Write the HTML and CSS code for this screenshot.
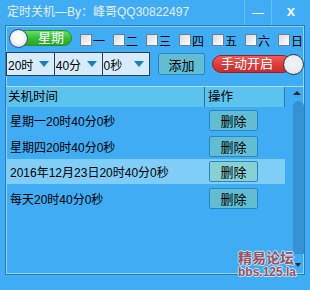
FILE: index.html
```html
<!DOCTYPE html>
<html>
<head>
<meta charset="utf-8">
<link rel="stylesheet" href="styles.css">
</head>
<body>
<div class="window">
  <div class="titlebar">
    <div class="title">定时关机—By：峰哥QQ30822497</div>
    <div class="ctrl min">—</div>
    <div class="ctrl close">x</div>
  </div>
  <div class="frame">
    <div class="row1">
      <div class="sw green"><span class="knob"></span><span class="pill">星期</span></div>
      <div class="days">
        <label class="day"><span class="cb"></span><span>一</span></label>
        <label class="day"><span class="cb"></span><span>二</span></label>
        <label class="day"><span class="cb"></span><span>三</span></label>
        <label class="day"><span class="cb"></span><span>四</span></label>
        <label class="day"><span class="cb"></span><span>五</span></label>
        <label class="day"><span class="cb"></span><span>六</span></label>
        <label class="day"><span class="cb"></span><span>日</span></label>
      </div>
    </div>
    <div class="row2">
      <div class="sel"><span>20时</span><i class="arr"></i></div>
      <div class="sel"><span>40分</span><i class="arr"></i></div>
      <div class="sel"><span>0秒</span><i class="arr"></i></div>
      <div class="btn add">添加</div>
      <div class="sw red"><span class="pill">手动开启</span><span class="knob"></span></div>
    </div>
    <div class="list">
      <div class="table">
        <div class="head">
          <div class="c1">关机时间</div>
          <div class="c2">操作</div>
        </div>
        <div class="item"><div class="c1">星期一20时40分0秒</div><div class="c2"><span class="btn del">删除</span></div></div>
        <div class="item"><div class="c1">星期四20时40分0秒</div><div class="c2"><span class="btn del">删除</span></div></div>
        <div class="item sel-row"><div class="c1">2016年12月23日20时40分0秒</div><div class="c2"><span class="btn del">删除</span></div></div>
        <div class="item"><div class="c1">每天20时40分0秒</div><div class="c2"><span class="btn del">删除</span></div></div>
      </div>
      <div class="scroll">
        <i class="up"></i>
        <div class="thumb"></div>
        <i class="down"></i>
      </div>
    </div>
  </div>
  <div class="mark"><div class="m1">精易论坛</div><div class="m2">bbs.125.la</div></div>
</div>
</body>
</html>
```
FILE: styles.css
```css
html, body {
  margin: 0;
  padding: 0;
}
body {
  width: 310px;
  height: 290px;
  background: #40acf4;
  font-family: "Liberation Sans", "Noto Sans CJK SC", sans-serif;
  font-size: 12px;
  color: #000;
  overflow: hidden;
}
.window {
  position: relative;
  width: 310px;
  height: 290px;
}
.titlebar {
  height: 25px;
  display: flex;
  align-items: stretch;
}
.title {
  flex: 1;
  padding-left: 7px;
  color: #e4eef8;
  font-size: 12px;
  line-height: 24px;
}
.ctrl {
  display: flex;
  align-items: center;
  justify-content: center;
  color: #f4f8fc;
  border-left: 1px solid #68bff4;
}
.min {
  width: 26px;
  font-size: 12px;
  line-height: 1;
}
.close {
  width: 39px;
  font-weight: bold;
  font-size: 15px;
  padding-bottom: 5px;
  box-sizing: border-box;
}
.frame {
  margin-left: 5px;
  width: 300px;
  height: 250px;
  box-sizing: border-box;
  border: 1px solid #2a7cbc;
  box-shadow: inset 1px 1px 0 #8fd2fa, inset -1px -1px 0 #8fd2fa;
  display: flex;
  flex-direction: column;
}
.row1 {
  height: 26px;
  display: flex;
  align-items: center;
  padding-left: 3px;
}
.sw {
  display: flex;
  align-items: center;
}
.knob {
  width: 19px;
  height: 19px;
  border-radius: 50%;
  box-sizing: border-box;
  border: 1px solid #2f4f78;
  background: radial-gradient(circle at 50% 45%, #ffffff 0%, #f6f8fa 45%, #b8c2cc 100%);
  z-index: 2;
  flex: none;
}
.green {
  margin-bottom: 2px;
}
.green .pill {
  margin-left: -10px;
  width: 54px;
  height: 16px;
  box-sizing: border-box;
  padding-left: 12px;
  border-radius: 8px;
  border: 1px solid #2b8f2b;
  background: linear-gradient(#62e262, #34b834 60%, #2aa42a);
  color: #fff;
  font-size: 13px;
  line-height: 14px;
  text-align: center;
}
.days {
  display: flex;
  margin-left: 8px;
  padding-top: 2px;
}
.day {
  display: flex;
  align-items: center;
  width: 33px;
  font-size: 12px;
}
.cb {
  width: 12px;
  height: 12px;
  box-sizing: border-box;
  border: 1px solid #6d7f8f;
  background: linear-gradient(135deg, #d4dbe2, #ffffff);
  margin-right: 1px;
}
.row2 {
  display: flex;
  align-items: center;
  height: 24px;
  margin-top: 0px;
}
.sel {
  width: 49px;
  height: 24px;
  box-sizing: border-box;
  border: 1px solid #2d3d4d;
  background: #d6ecfc;
  display: flex;
  align-items: center;
  justify-content: space-between;
  padding-left: 1px;
  padding-right: 5px;
}
.sel + .sel {
  margin-left: -1px;
}
.arr {
  width: 0;
  height: 0;
  border-left: 5px solid transparent;
  border-right: 5px solid transparent;
  border-top: 6px solid #1382c4;
}
.btn {
  display: flex;
  align-items: center;
  justify-content: center;
  box-sizing: border-box;
  background: #63bdd2;
  border: 1px solid #2388c4;
  border-radius: 2px;
  font-size: 13px;
}
.add {
  margin-left: 8px;
  width: 47px;
  height: 22px;
}
.red {
  margin-left: 7px;
}
.red .pill {
  width: 80px;
  height: 18px;
  box-sizing: border-box;
  border-radius: 9px;
  border: 1px solid #8e2424;
  background: linear-gradient(#f45a5a, #dc3838 60%, #c82c2c);
  color: #fff;
  font-size: 13px;
  line-height: 16px;
  padding-right: 10px;
  text-align: center;
}
.red .knob {
  width: 21px;
  height: 21px;
  margin-left: -9px;
  border: 1px solid #283848;
  background: radial-gradient(circle at 50% 45%, #f2f5f8 0%, #e6ebf0 60%, #c4ccd4 100%);
}
.list {
  margin-top: 10px;
  flex: 1;
  display: flex;
  border-top: 1px solid #a8ddf8;
}
.table {
  width: 280px;
}
.head {
  display: flex;
  height: 20px;
  background: #5cc3ee;
  border-right: 1px solid #2d7aa8;
  line-height: 20px;
  font-size: 12.5px;
}
.head .c1 {
  width: 199px;
  padding-left: 2px;
  border-right: 1px solid #2d6d98;
  box-sizing: border-box;
}
.head .c2 {
  padding-left: 3px;
}
.item {
  display: flex;
  align-items: center;
  height: 26px;
  width: 279px;
}
.item .c1 {
  width: 200px;
  padding-left: 4px;
  box-sizing: border-box;
  white-space: nowrap;
  overflow: hidden;
  font-size: 12px;
}
.item .c2 {
  padding-left: 3px;
}
.sel-row {
  background: #80cef8;
  height: 25px;
  margin-bottom: 1px;
}
.del {
  width: 49px;
  height: 21px;
}
.sel-row .del {
  background: #88d0d4;
}
.scroll {
  width: 18px;
  display: flex;
  flex-direction: column;
  align-items: flex-end;
  border-left: 1px solid transparent;
}
.up {
  width: 0;
  height: 0;
  border-left: 4px solid transparent;
  border-right: 4px solid transparent;
  border-bottom: 4px solid #2a2a2a;
  margin: 4px 3px 0 0;
}
.thumb {
  width: 11px;
  height: 153px;
  margin-top: 6px;
  background: #3591d2;
  border-radius: 6px 6px 0 0;
}
.down {
  width: 0;
  height: 0;
  border-left: 3px solid transparent;
  border-right: 3px solid transparent;
  border-top: 4px solid #2a2a2a;
  margin: 9px 3px 0 0;
}
.mark {
  position: absolute;
  left: 238px;
  top: 251px;
  font-weight: bold;
  color: #9a5262;
  text-shadow: 1px 0 0 #c6e4f6, -1px 0 0 #c6e4f6, 0 1px 0 #c6e4f6, 0 -1px 0 #c6e4f6;
  line-height: 1;
}
.m1 {
  font-size: 14px;
}
.m2 {
  font-size: 12px;
  margin-top: 1px;
}
```
